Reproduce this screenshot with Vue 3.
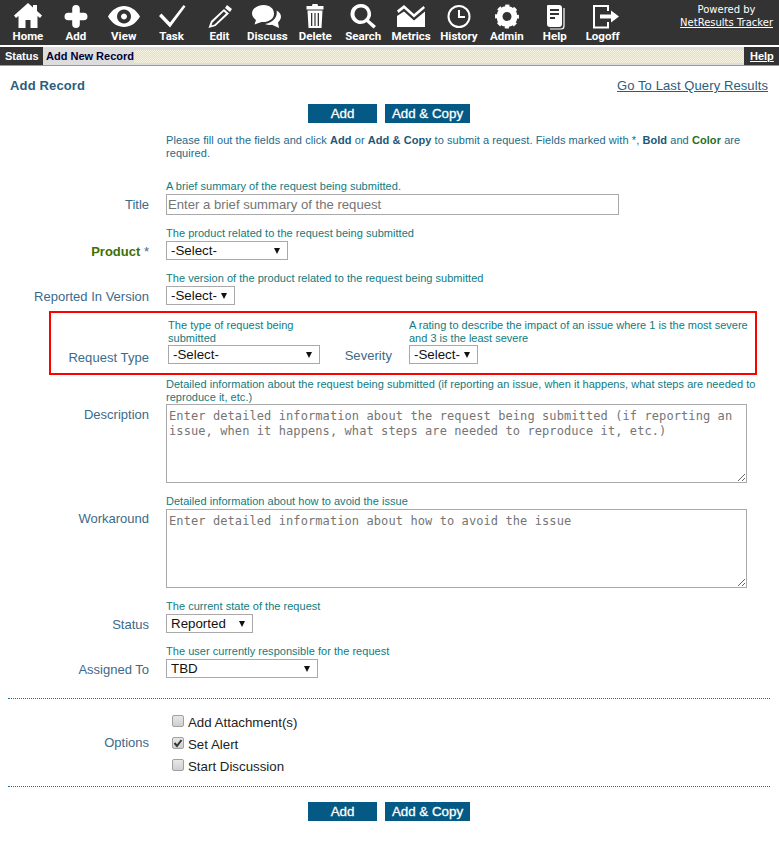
<script setup>
</script>

<template>
  <div class="page">
    <header class="topbar">
      <nav class="nav">
        <a class="nav-item">
          <svg viewBox="0 0 32 28" class="ico"><path d="M16 0 L2 12.500 L4 15 L6.500 13 V25 H13.500 V17 H18.500 V25 H25.500 V13 L28 15 L30 12.500 L25 8 V2 H21 V4.500 Z" /></svg>
          <span>Home</span>
        </a>
        <a class="nav-item">
          <svg viewBox="0 0 32 28" class="ico"><path d="M16 2 a3.800 3.800 0 0 1 3.800 3.800 V9.700 H23.700 a3.800 3.800 0 0 1 0 7.600 H19.800 V21.200 a3.800 3.800 0 0 1 -7.600 0 V17.300 H8.300 a3.800 3.800 0 0 1 0 -7.600 H12.200 V5.800 A3.800 3.800 0 0 1 16 2 Z" /></svg>
          <span>Add</span>
        </a>
        <a class="nav-item">
          <svg viewBox="0 0 32 28" class="ico"><path fill-rule="evenodd" d="M0 13.500 C4 6.500 10 3 16 3 C22 3 28 6.500 32 13.500 C28 20.500 22 24 16 24 C10 24 4 20.500 0 13.500 Z M16 6.500 a7 7 0 1 0 0.010 0 Z M16 10.500 a3 3 0 1 1 -0.010 0 Z" /></svg>
          <span>View</span>
        </a>
        <a class="nav-item">
          <svg viewBox="0 0 32 28" class="ico"><path d="M3 13 L5.500 10.500 L14 19.500 L27.500 2 L29.500 3.500 L14 24.500 Z" /></svg>
          <span>Task</span>
        </a>
        <a class="nav-item">
          <svg viewBox="0 0 32 28" class="ico"><path fill-rule="evenodd" d="M23 2 L28 6 L26 9 L21 5 Z M20 6 L25 10.500 L11.500 23 L4.500 25 L7 18 Z M19.800 8.500 L8.500 19.500 L7.500 22.500 L10.500 21.500 L22 10.500 Z" /></svg>
          <span>Edit</span>
        </a>
        <a class="nav-item">
          <svg viewBox="0 0 32 28" class="ico">
            <path d="M13 2 C6.500 2 1 5.500 1 10.500 C1 13.500 3 15.500 5 17 L3.500 21.500 L10.500 19 C17 19.500 23 16.500 23 10.500 C23 5.500 18.500 2 13 2 Z" />
            <path d="M25.500 7.500 C27 13 23 19.500 14 21 C16 22 18.500 22.300 21 21.800 L28 25 L27 19.500 C31 16 31.500 10.500 25.500 7.500 Z" />
          </svg>
          <span>Discuss</span>
        </a>
        <a class="nav-item">
          <svg viewBox="0 0 32 28" class="ico"><path fill-rule="evenodd" d="M13.500 1 H18.500 L19 3 H24.500 V6.500 H7.500 V3 H13 Z M8.500 7.500 H23.500 L22.500 25 H9.500 Z M12 10 V23 H13.300 V10 Z M15.400 10 V23 H16.600 V10 Z M18.700 10 V23 H20 V10 Z" /></svg>
          <span>Delete</span>
        </a>
        <a class="nav-item">
          <svg viewBox="0 0 32 28" class="ico"><path fill-rule="evenodd" d="M14 1 a10 10 0 0 1 8 16 L29 23 L26.500 25.500 L19.500 19 A10 10 0 1 1 14 1 Z M14 4.500 a6.500 6.500 0 1 0 0.010 0 Z" /></svg>
          <span>Search</span>
        </a>
        <a class="nav-item">
          <svg viewBox="0 0 32 28" class="ico">
            <path d="M2 7.500 L9 2 L19 11 L28.500 3 L30 5 L19 14.500 L9 5.500 L3.500 10 Z" />
            <path d="M2 13 L9 8.500 L19 17.500 L30 8.500 V24 H2 Z" />
          </svg>
          <span>Metrics</span>
        </a>
        <a class="nav-item">
          <svg viewBox="0 0 32 28" class="ico">
            <circle cx="16" cy="13.500" r="10.500" fill="none" stroke="#fff" stroke-width="2" />
            <path d="M15 7 H17 V13 H22 V15 H15 Z" />
          </svg>
          <span>History</span>
        </a>
        <a class="nav-item">
          <svg viewBox="0 0 32 28" class="ico">
            <circle cx="16" cy="13.500" r="7.500" fill="none" stroke="#fff" stroke-width="6" />
            <circle cx="16" cy="13.500" r="10.500" fill="none" stroke="#fff" stroke-width="3" stroke-dasharray="4.120 4.120" stroke-dashoffset="2.060" />
          </svg>
          <span>Admin</span>
        </a>
        <a class="nav-item">
          <svg viewBox="0 0 32 28" class="ico">
            <path fill-rule="evenodd" d="M9 2 H20 Q23 2 23 5 V21 Q23 24 20 24 H11 Q8 24 8 21 V3 Q8 2 9 2 Z M11 6 V8 H20 V6 Z M11 10 V12 H20 V10 Z M11 14 V16 H16 V14 Z" />
            <path d="M25 5 V23 Q25 26 22 26 H11" fill="none" stroke="#fff" stroke-width="1.200" />
          </svg>
          <span>Help</span>
        </a>
        <a class="nav-item">
          <svg viewBox="0 0 32 28" class="ico">
            <path d="M21 8 V3 H7 V24.500 H21 V19" fill="none" stroke="#fff" stroke-width="2" />
            <path d="M13 11.500 H24 V7.500 L32 13.500 L24 19.500 V15.500 H13 Z" />
          </svg>
          <span>Logoff</span>
        </a>
      </nav>
      <div class="powered">Powered by<br /><a class="powered-link">NetResults Tracker</a></div>
    </header>

    <div class="statusbar">
      <span class="status-tab">Status</span>
      <span class="status-text">Add New Record</span>
      <span class="status-fill"></span>
      <a class="status-help">Help</a>
    </div>

    <main class="content">
      <div class="title-row">
        <h1>Add Record</h1>
        <a class="last-query">Go To Last Query Results</a>
      </div>

      <div class="actions">
        <button class="btn btn-add">Add</button>
        <button class="btn btn-copy">Add &amp; Copy</button>
      </div>

      <p class="intro">Please fill out the fields and click <b>Add</b> or <b>Add &amp; Copy</b> to submit a request. Fields marked with *, <b>Bold</b> and <b class="green">Color</b> are<br />required.</p>

      <div class="row row-title">
        <label>Title</label>
        <div class="field">
          <div class="hint">A brief summary of the request being submitted.</div>
          <input class="text-input" placeholder="Enter a brief summary of the request" />
        </div>
      </div>

      <div class="row">
        <label class="required"><b>Product</b> *</label>
        <div class="field">
          <div class="hint">The product related to the request being submitted</div>
          <select class="sel w122"><option>-Select-</option></select>
        </div>
      </div>

      <div class="row">
        <label>Reported In Version</label>
        <div class="field">
          <div class="hint">The version of the product related to the request being submitted</div>
          <select class="sel w69"><option>-Select-</option></select>
        </div>
      </div>

      <div class="highlight">
        <label class="hl-label">Request Type</label>
        <div class="hl-field hl-type">
          <div class="hint">The type of request being submitted</div>
          <select class="sel w152"><option>-Select-</option></select>
        </div>
        <label class="hl-sev">Severity</label>
        <div class="hl-field hl-rating">
          <div class="hint">A rating to describe the impact of an issue where 1 is the most severe and 3 is the least severe</div>
          <select class="sel w69"><option>-Select-</option></select>
        </div>
      </div>

      <div class="row row-top row-desc">
        <label>Description</label>
        <div class="field">
          <div class="hint">Detailed information about the request being submitted (if reporting an issue, when it happens, what steps are needed to reproduce it, etc.)</div>
          <textarea class="area" placeholder="Enter detailed information about the request being submitted (if reporting an issue, when it happens, what steps are needed to reproduce it, etc.)"></textarea>
        </div>
      </div>

      <div class="row row-top row-work">
        <label>Workaround</label>
        <div class="field">
          <div class="hint">Detailed information about how to avoid the issue</div>
          <textarea class="area" placeholder="Enter detailed information about how to avoid the issue"></textarea>
        </div>
      </div>

      <div class="row">
        <label>Status</label>
        <div class="field">
          <div class="hint">The current state of the request</div>
          <select class="sel w87"><option>Reported</option></select>
        </div>
      </div>

      <div class="row">
        <label>Assigned To</label>
        <div class="field">
          <div class="hint">The user currently responsible for the request</div>
          <select class="sel w152"><option>TBD</option></select>
        </div>
      </div>

      <div class="options">
        <label class="opt-label">Options</label>
        <div class="opt-list">
          <label class="check"><input type="checkbox" />Add Attachment(s)</label>
          <label class="check"><input type="checkbox" checked />Set Alert</label>
          <label class="check"><input type="checkbox" />Start Discussion</label>
        </div>
      </div>

      <div class="actions actions-bottom">
        <button class="btn btn-add">Add</button>
        <button class="btn btn-copy">Add &amp; Copy</button>
      </div>
    </main>
  </div>
</template>

<style>
html, body { margin: 0; background: #fff; }
</style>

<style scoped>
.page {
  width: 779px;
  height: 859px;
  overflow: hidden;
  background: #fff;
  font-family: "Liberation Sans", Arial, sans-serif;
}
.topbar {
  height: 45px;
  background: #333;
  display: flex;
  justify-content: space-between;
  color: #fff;
}
.nav {
  display: grid;
  grid-template-columns: repeat(13, 47.900px);
  padding-left: 4px;
}
.nav-item {
  display: flex;
  flex-direction: column;
  align-items: center;
  padding-top: 3px;
  font-family: Roboto, sans-serif;
  font-weight: 700;
  font-size: 11.500px;
  line-height: 16px;
  white-space: nowrap;
}
.ico {
  width: 32px;
  height: 28px;
  display: block;
  fill: #fff;
  margin-bottom: -3px;
  overflow: visible;
}
.powered {
  font-family: "DejaVu Sans", sans-serif;
  font-size: 10px;
  line-height: 13px;
  text-align: center;
  padding: 3px 6px 0 0;
}
.powered-link { text-decoration: underline; font-weight: 400; }

.statusbar {
  margin-top: 2px;
  height: 19px;
  background: #ddd;
  display: flex;
  align-items: stretch;
  font-size: 11px;
  line-height: 18px;
  border-bottom: 1px solid #999;
  box-sizing: border-box;
}
.status-tab {
  background: #333;
  color: #fff;
  font-weight: 700;
  padding: 0 7px 0 5px;
  width: 31px;
}
.status-text {
  color: #000033;
  font-weight: 700;
  padding-left: 3px;
}
.status-fill {
  flex: 1;
  padding: 3px 0 2px;
  background-image: repeating-conic-gradient(#f5f3e0 0 25%, #ddd 0 50%);
  background-size: 2px 2px;
  background-clip: content-box;
}
.status-help {
  background: #333;
  color: #fff;
  font-weight: 700;
  text-decoration: underline;
  padding: 0 6px;
  width: 23px;
}

.content { padding: 0 9px 0 8px; }
.title-row {
  display: flex;
  justify-content: space-between;
  align-items: flex-start;
  padding: 12px 2px 0;
  height: 26px;
  line-height: 16px;
}
h1 {
  margin: 0;
  font-size: 13px;
  letter-spacing: 0.150px;
  font-weight: 700;
  color: #2b5d7d;
}
.last-query {
  font-size: 13px;
  letter-spacing: 0.100px;
  color: #2b5d7d;
  text-decoration: underline;
}
.actions {
  display: flex;
  justify-content: center;
  gap: 8px;
}
.btn {
  height: 19px;
  border: 0;
  padding: 0;
  background: #045a84;
  color: #fff;
  -webkit-text-stroke: 0.300px #fff;
  font: 400 13.333px/19px "Liberation Sans", Arial, sans-serif;
}
.btn-add { width: 69px; }
.btn-copy { width: 85px; }
.intro {
  margin: 11px 10px 0 158px;
  font-size: 11px;
  letter-spacing: 0.070px;
  line-height: 13px;
  color: #1d6a8a;
}
.intro b { color: #1c5878; }
.intro b.green { color: #2a6f1e; }

.row {
  display: grid;
  grid-template-columns: 141px 1fr;
  column-gap: 17px;
  align-items: end;
  margin-top: 12px;
}
.row > label {
  text-align: right;
  font-size: 13px;
  line-height: 16px;
  color: #3c6a8a;
  padding-bottom: 0;
}
.required b { color: #3f6f00; font-weight: 700; }
.row-title { margin-top: 20px; }
.row-title > label { padding-bottom: 2px; }
.hint {
  font-size: 11px;
  letter-spacing: 0.030px;
  line-height: 13px;
  color: #0f7b80;
  margin-bottom: 1px;
}
.hl-field .hint { margin-bottom: 0; }
.text-input {
  display: block;
  box-sizing: border-box;
  width: 453px;
  height: 21px;
  padding: 0 1px;
  border: 1px solid #a9a9a9;
  font: 13.150px "Liberation Sans", Arial, sans-serif;
  outline: 0;
}
.text-input::placeholder { color: #757575; opacity: 1; }
.sel {
  display: block;
  box-sizing: border-box;
  height: 19px;
  appearance: none;
  background: #fff url("data:image/svg+xml,%3Csvg xmlns='http://www.w3.org/2000/svg' width='8' height='8'%3E%3Cpath d='M1 1H7L4 7Z' fill='%23111'/%3E%3C/svg%3E") no-repeat right 6px top 5px;
  border: 1px solid #a9a9a9;
  border-radius: 0;
  padding: 0 0 0 4px;
  font: 13.333px "Liberation Sans", Arial, sans-serif;
  color: #111;
}
.w69 { width: 69px; }
.w87 { width: 87px; }
.w122 { width: 122px; }
.w152 { width: 152px; }

.highlight {
  box-sizing: border-box;
  margin: 6px 0 0 41px;
  width: 708px;
  height: 64px;
  border: 2px solid #f00;
  display: flex;
  align-items: flex-end;
  padding-bottom: 9px;
}
.hl-label {
  width: 98px;
  text-align: right;
  font-size: 13px;
  letter-spacing: 0.050px;
  line-height: 16px;
  color: #3c6a8a;
  margin-bottom: -2px;
}
.hl-type { margin-left: 19px; width: 152px; }
.hl-sev {
  margin-left: 24px;
  width: 48px;
  font-size: 13px;
  letter-spacing: 0.050px;
  line-height: 16px;
  color: #3c6a8a;
  text-align: right;
  margin-bottom: 0;
}
.hl-rating { margin-left: 17px; width: 342px; }
.hl-rating .hint { letter-spacing: 0; }

.row-top { align-items: start; }
.row-top > label { padding-bottom: 0; }
.row-desc { margin-top: 3px; }
.row-desc .hint { margin-bottom: 0; }
.row-desc > label { padding-top: 29px; }
.row-work > label { padding-top: 16px; }
.area {
  display: block;
  box-sizing: border-box;
  width: 581px;
  height: 79px;
  padding: 4px 2px 2px;
  border: 1px solid #a9a9a9;
  font: 12px/15px "DejaVu Sans Mono", monospace;
  letter-spacing: 0.090px;
  outline: 0;
  resize: both;
}
.area::placeholder { color: #757575; opacity: 1; }

.options {
  margin-top: 20px;
  border-top: 1px dotted #007a99;
  border-bottom: 1px dotted #007a99;
  height: 89px;
  display: grid;
  grid-template-columns: 141px 1fr;
  column-gap: 23px;
  align-items: start;
  box-sizing: border-box;
  width: 762px;
}
.opt-label {
  text-align: right;
  font-size: 13px;
  line-height: 16px;
  color: #3c6a8a;
  padding-top: 36px;
}
.opt-list { display: flex; flex-direction: column; gap: 6px; padding-top: 16px; }
.check {
  display: flex;
  align-items: center;
  font-size: 13.300px;
  line-height: 16px;
  color: #222;
}
.check input {
  appearance: none;
  box-sizing: border-box;
  margin: 0 4px 4px 0;
  width: 12px;
  height: 12px;
  border: 1px solid #a0a0a0;
  border-radius: 2px;
  background: linear-gradient(#e8e8e8, #cfcfcf);
}
.check input:checked {
  background: url("data:image/svg+xml,%3Csvg xmlns='http://www.w3.org/2000/svg' width='10' height='10'%3E%3Cpath d='M1.500 5L4 8L8.500 2' fill='none' stroke='%23333' stroke-width='2'/%3E%3C/svg%3E") center no-repeat, linear-gradient(#e8e8e8, #cfcfcf);
}
.actions-bottom { margin-top: 15px; }
</style>
